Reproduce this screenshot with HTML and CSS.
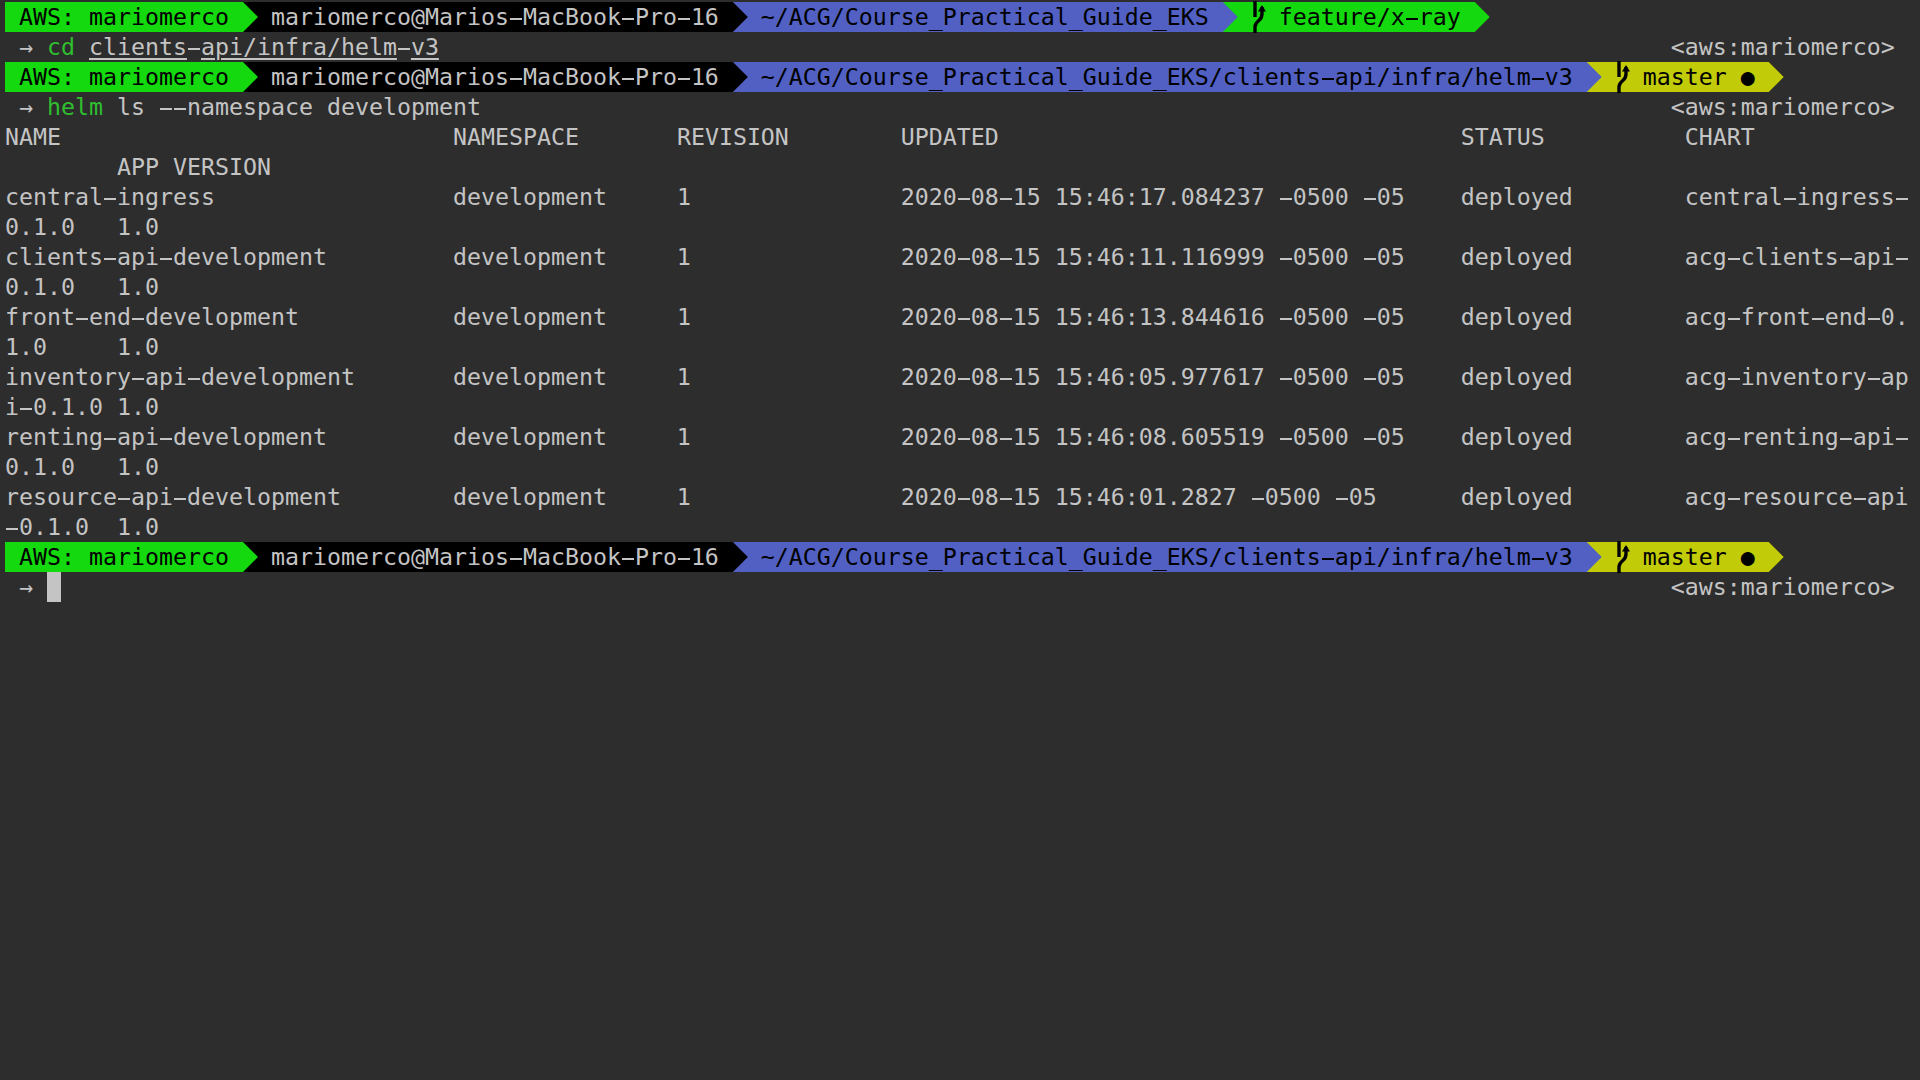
FILE: index.html
```html
<!DOCTYPE html>
<html lang="en">
<head>
<meta charset="utf-8">
<title>Terminal</title>
<link rel="stylesheet" href="styles.css">
</head>
<body>
<main class="term">
  <div class="bar"><span class="seg s-green first"> AWS: mariomerco </span><span class="seg s-black">  mariomerco@Marios<i>-</i>MacBook<i>-</i>Pro<i>-</i>16 </span><span class="seg s-blue">  ~/ACG/Course_Practical_Guide_EKS </span><span class="seg s-green">  <svg class="branch" viewBox="0 0 14 30"><path class="stem" d="M4 -1V15"/><path class="stem" d="M4 31V25C4 18 11 20 11 12V5"/><path class="head" d="M7 9.5L11 3L15 9.5Z"/></svg> feature/x<i>-</i>ray </span></div>
  <div class="line"><span class="prompt"> <span class="arrow">→</span> <span class="cmd">cd</span> <span class="path">clients<i>-</i>api/infra/helm<i>-</i>v3</span></span><span class="right">&lt;aws:mariomerco&gt;</span></div>
  <div class="bar"><span class="seg s-green first"> AWS: mariomerco </span><span class="seg s-black">  mariomerco@Marios<i>-</i>MacBook<i>-</i>Pro<i>-</i>16 </span><span class="seg s-blue">  ~/ACG/Course_Practical_Guide_EKS/clients<i>-</i>api/infra/helm<i>-</i>v3 </span><span class="seg s-yellow">  <svg class="branch" viewBox="0 0 14 30"><path class="stem" d="M4 -1V15"/><path class="stem" d="M4 31V25C4 18 11 20 11 12V5"/><path class="head" d="M7 9.5L11 3L15 9.5Z"/></svg> master ● </span></div>
  <div class="line"><span class="prompt"> <span class="arrow">→</span> <span class="cmd">helm</span> ls <i>-</i><i>-</i>namespace development</span><span class="right">&lt;aws:mariomerco&gt;</span></div>
  <div class="row">NAME                            NAMESPACE       REVISION        UPDATED                                 STATUS          CHART</div>
  <div class="row">        APP VERSION</div>
  <div class="row">central<i>-</i>ingress                 development     1               2020<i>-</i>08<i>-</i>15 15:46:17.084237 <i>-</i>0500 <i>-</i>05    deployed        central<i>-</i>ingress<i>-</i></div>
  <div class="row">0.1.0   1.0</div>
  <div class="row">clients<i>-</i>api<i>-</i>development         development     1               2020<i>-</i>08<i>-</i>15 15:46:11.116999 <i>-</i>0500 <i>-</i>05    deployed        acg<i>-</i>clients<i>-</i>api<i>-</i></div>
  <div class="row">0.1.0   1.0</div>
  <div class="row">front<i>-</i>end<i>-</i>development           development     1               2020<i>-</i>08<i>-</i>15 15:46:13.844616 <i>-</i>0500 <i>-</i>05    deployed        acg<i>-</i>front<i>-</i>end<i>-</i>0.</div>
  <div class="row">1.0     1.0</div>
  <div class="row">inventory<i>-</i>api<i>-</i>development       development     1               2020<i>-</i>08<i>-</i>15 15:46:05.977617 <i>-</i>0500 <i>-</i>05    deployed        acg<i>-</i>inventory<i>-</i>ap</div>
  <div class="row">i<i>-</i>0.1.0 1.0</div>
  <div class="row">renting<i>-</i>api<i>-</i>development         development     1               2020<i>-</i>08<i>-</i>15 15:46:08.605519 <i>-</i>0500 <i>-</i>05    deployed        acg<i>-</i>renting<i>-</i>api<i>-</i></div>
  <div class="row">0.1.0   1.0</div>
  <div class="row">resource<i>-</i>api<i>-</i>development        development     1               2020<i>-</i>08<i>-</i>15 15:46:01.2827 <i>-</i>0500 <i>-</i>05      deployed        acg<i>-</i>resource<i>-</i>api</div>
  <div class="row"><i>-</i>0.1.0  1.0</div>
  <div class="bar"><span class="seg s-green first"> AWS: mariomerco </span><span class="seg s-black">  mariomerco@Marios<i>-</i>MacBook<i>-</i>Pro<i>-</i>16 </span><span class="seg s-blue">  ~/ACG/Course_Practical_Guide_EKS/clients<i>-</i>api/infra/helm<i>-</i>v3 </span><span class="seg s-yellow">  <svg class="branch" viewBox="0 0 14 30"><path class="stem" d="M4 -1V15"/><path class="stem" d="M4 31V25C4 18 11 20 11 12V5"/><path class="head" d="M7 9.5L11 3L15 9.5Z"/></svg> master ● </span></div>
  <div class="line"><span class="prompt"> <span class="arrow">→</span> <span class="cursor"> </span></span><span class="right">&lt;aws:mariomerco&gt;</span></div>
</main>
</body>
</html>
```

FILE: styles.css
```css
html, body {
  margin: 0;
  height: 100%;
  background: #2d2d2d;
}

body {
  overflow: hidden;
}

.term {
  box-sizing: border-box;
  width: 1920px;
  height: 1080px;
  padding: 2px 5px 0;
  color: #c4c4c4;
  font-family: "DejaVu Sans Mono", monospace;
  font-size: 23.26px;
  line-height: 30px;
}

.line,
.bar,
.row {
  height: 30px;
  width: 136ch;
  white-space: pre;
}

.line,
.bar {
  display: flex;
}

.line {
  justify-content: space-between;
  padding-right: 1ch;
  box-sizing: border-box;
}

/* The reference font draws longer hyphens: the bar extends the glyph */
i {
  display: inline-block;
  width: 1ch;
  height: 30px;
  font-style: normal;
  vertical-align: top;
  background: linear-gradient(currentColor, currentColor) 1px 16px / 12px 2px no-repeat;
}

.seg {
  position: relative;
  display: block;
  height: 30px;
  color: #000;
}

.seg::after {
  content: "";
  position: absolute;
  z-index: 1;
  top: 0;
  left: 100%;
  width: 15px;
  height: 30px;
  background: inherit;
  clip-path: polygon(0 0, 100% 50%, 0 100%);
}

.s-green {
  background: #14d90e;
}

.s-black {
  background: #000;
  color: #c4c4c4;
}

.s-blue {
  background: #5160c2;
}

.s-yellow {
  background: #c1cb08;
}

.branch {
  display: inline-block;
  width: 1ch;
  height: 30px;
  overflow: visible;
  vertical-align: top;
}

.stem {
  fill: none;
  stroke: #000;
  stroke-width: 3.4;
}

.head {
  fill: #000;
}

.cmd {
  color: #2fbf2f;
}

.path {
  text-decoration: underline;
  text-decoration-thickness: 2px;
  text-underline-offset: 3px;
}

.cursor {
  display: inline-block;
  width: 1ch;
  height: 30px;
  vertical-align: top;
  background: #c4c4c4;
}
```
